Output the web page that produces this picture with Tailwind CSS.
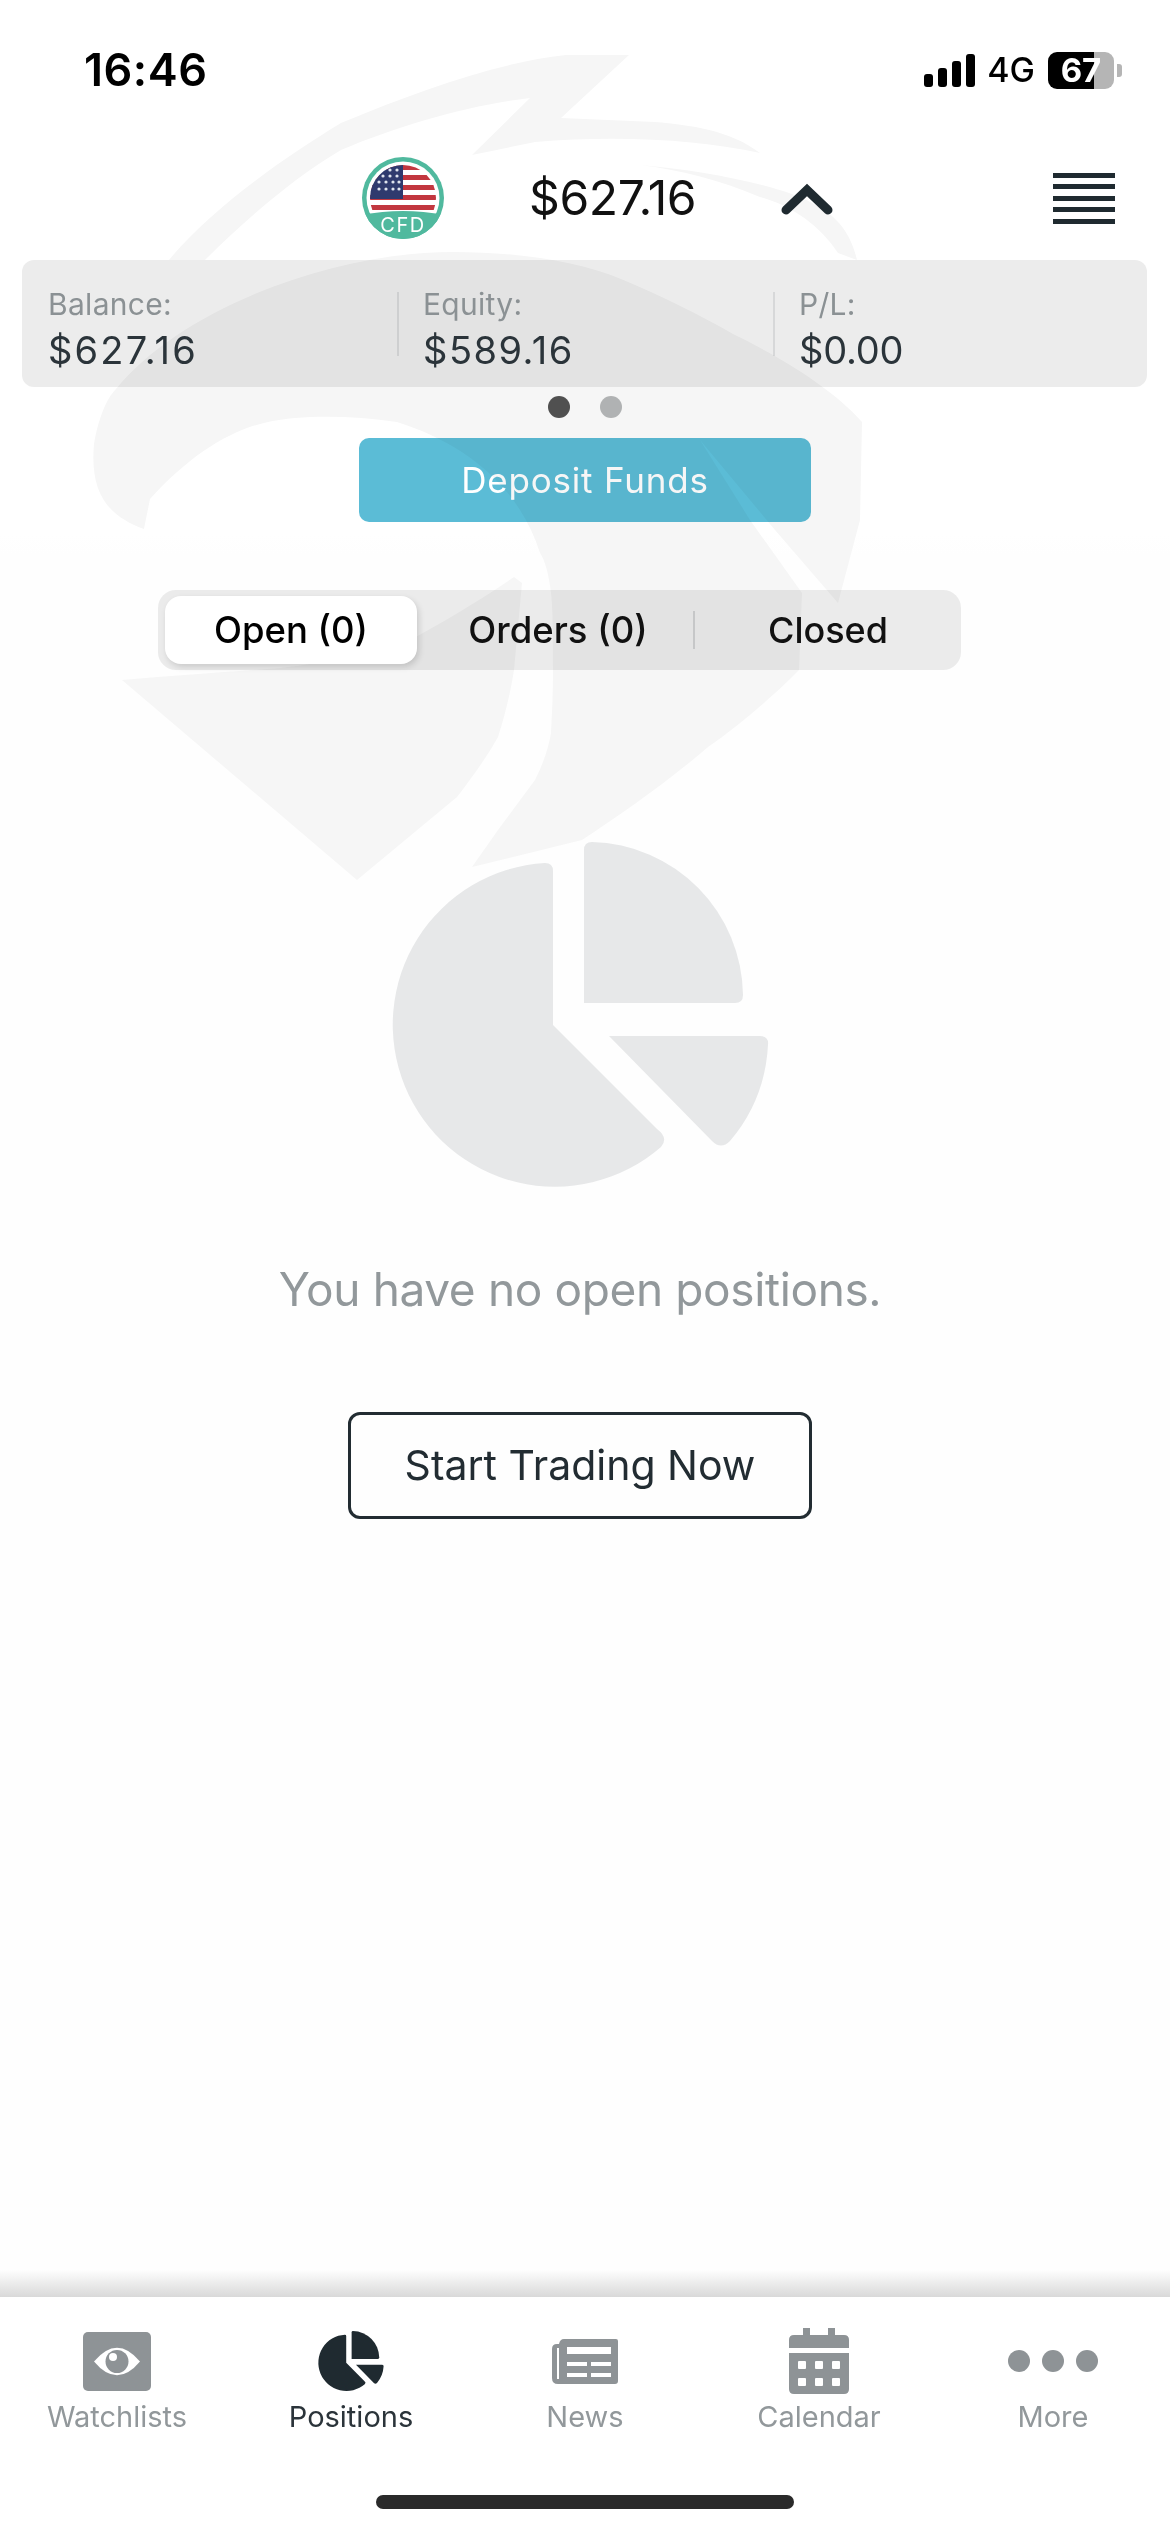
<!DOCTYPE html>
<html lang="en">
<head>
    <meta charset="UTF-8" />
    <meta name="viewport" content="width=device-width, initial-scale=1.0" />
    <title>Positions</title>
    <script src="https://cdn.jsdelivr.net/npm/@tailwindcss/browser@4"></script>
</head>
<body class="bg-white [font-family:Inter,sans-serif]">
<div class="relative w-[1170px] h-[2532px] overflow-hidden flex flex-col bg-[linear-gradient(#fff_535px,#fefefe_555px)]">

    <!-- faint logo behind everything -->
    <svg class="absolute left-0 top-0" width="1170" height="900" viewBox="0 0 1170 900" fill="#f6f6f6">
        <path d="M629 55 L566 55 C500 62 420 90 341 123 C280 160 210 210 169 260 L205 260 C240 225 290 180 341 150 C400 125 470 105 530 98 L472 155 L535 142 C620 135 700 140 760 153 C730 130 690 125 655 122 L561 118 Z" />
        <path d="M640 165 C700 170 780 185 812 203 C835 215 850 230 857 260 L838 253 C820 225 790 205 760 197 C720 180 680 170 640 165 Z" />
        <path d="M144 529 C105 515 90 490 94 444 C100 410 110 395 116 389 C180 310 330 252 453 252 C520 252 580 262 621 279 C660 295 700 315 733 334 C770 352 830 385 862 422 L860 520 L838 603 L775 530 L700 440 L750 520 L802 593 L799 670 C780 690 740 725 708 747 C670 780 620 815 582 840 L472 867 L498 830 L535 780 C545 760 549 745 551 733 C553 700 553 680 553 670 C553 640 553 610 551 593 C549 575 545 560 540 553 C520 490 470 445 397 422 C350 415 300 415 268 422 C230 430 190 455 150 499 Z" />
        <path d="M122 680 C180 675 230 672 280 668 C330 662 370 655 400 645 C440 625 480 600 514 577 L522 583 L514 670 C510 695 505 715 498 737 C485 760 470 780 457 797 L357 880 Z" />
    </svg>

    <!-- status bar -->
    <div class="relative h-[140px] flex items-center pl-[84px] pr-[48px] shrink-0">
        <span class="text-[45px] font-semibold text-black tracking-[0.5px]">16:46</span>
        <div class="ml-auto flex items-center">
            <div class="flex items-end gap-[5px] h-[34px]">
                <div class="w-[9px] h-[13px] rounded-[3px] bg-black"></div>
                <div class="w-[9px] h-[19px] rounded-[3px] bg-black"></div>
                <div class="w-[9px] h-[26px] rounded-[3px] bg-black"></div>
                <div class="w-[9px] h-[33px] rounded-[3px] bg-black"></div>
            </div>
            <span class="ml-[12px] text-[34px] font-medium text-black leading-none">4G</span>
            <div class="relative ml-[13px] w-[66px] h-[37px] flex">
                <div class="w-[46px] h-full bg-black rounded-l-[9px]"></div>
                <div class="w-[20px] h-full bg-[#b5b5b5] rounded-r-[9px]"></div>
                <span class="absolute inset-0 flex items-center justify-center text-[33px] font-bold text-white leading-none">67</span>
            </div>
            <div class="ml-[3px] w-[5px] h-[13px] rounded-r-[3px] bg-[#b5b5b5]"></div>
        </div>
    </div>

    <!-- account header -->
    <div class="relative mt-[8px] h-[100px] flex items-center pl-[362px] shrink-0">
        <svg width="82" height="82" viewBox="0 0 82 82">
            <defs>
                <clipPath id="flag"><circle cx="41" cy="41" r="33" /></clipPath>
                <clipPath id="badge"><circle cx="41" cy="41" r="41" /></clipPath>
            </defs>
            <circle cx="41" cy="41" r="41" fill="#50b99e" />
            <circle cx="41" cy="41" r="36.5" fill="#fff" />
            <g clip-path="url(#flag)">
                <rect width="82" height="82" fill="#fff" />
                <rect x="8" y="8" width="66" height="5" fill="#c2373f" />
                <rect x="8" y="18" width="66" height="5" fill="#c2373f" />
                <rect x="8" y="28" width="66" height="5" fill="#c2373f" />
                <rect x="8" y="38" width="66" height="5" fill="#c2373f" />
                <rect x="8" y="48" width="66" height="5" fill="#c2373f" />
                <rect x="8" y="8" width="33" height="34" fill="#2f3a6e" />
                <g fill="#dfe3ee">
                    <circle cx="17" cy="25" r="1.6" /><circle cx="24" cy="25" r="1.6" /><circle cx="31" cy="25" r="1.6" /><circle cx="37" cy="25" r="1.6" />
                    <circle cx="21" cy="19" r="1.6" /><circle cx="28" cy="19" r="1.6" /><circle cx="35" cy="19" r="1.6" />
                    <circle cx="17" cy="32" r="1.6" /><circle cx="24" cy="32" r="1.6" /><circle cx="31" cy="32" r="1.6" /><circle cx="37" cy="32" r="1.6" />
                    <circle cx="28" cy="13" r="1.6" /><circle cx="35" cy="13" r="1.6" />
                </g>
            </g>
            <g clip-path="url(#badge)">
                <path d="M0 58 Q41 50 82 58 L82 82 L0 82 Z" fill="#50b99e" />
            </g>
            <text x="41" y="75" text-anchor="middle" font-size="20" fill="#fff" letter-spacing="1.5" font-family="Inter, sans-serif">CFD</text>
        </svg>
        <span class="ml-[85px] text-[48px] text-[#111] tracking-[-0.4px] leading-none">$627.16</span>
        <svg class="ml-[85px]" width="56" height="36" viewBox="0 0 56 36" fill="none" stroke="#1f2a30" stroke-width="9" stroke-linejoin="miter" stroke-linecap="round">
            <path d="M5 30 L26 10 L47 30" />
        </svg>
        <div class="ml-auto mr-[55px] flex flex-col gap-[6.5px]">
            <div class="w-[62px] h-[5px] bg-[#1f2a30]"></div>
            <div class="w-[62px] h-[5px] bg-[#1f2a30]"></div>
            <div class="w-[62px] h-[5px] bg-[#1f2a30]"></div>
            <div class="w-[62px] h-[5px] bg-[#1f2a30]"></div>
            <div class="w-[62px] h-[5px] bg-[#1f2a30]"></div>
        </div>
    </div>

    <!-- balance panel -->
    <div class="relative mt-[12px] ml-[22px] w-[1125px] h-[127px] rounded-[12px] bg-[#2a2c2c]/[0.09] flex items-center shrink-0">
        <div class="w-[377px] h-[64px] pl-[26px] border-r-2 border-[#1f2a30]/10">
            <div class="text-[30px] leading-[28px] text-[#8b9194] tracking-[0.3px] -mt-[2px]">Balance:</div>
            <div class="text-[38px] leading-[44px] mt-[10px] text-[#2b343a] tracking-[2.2px]">$627.16</div>
        </div>
        <div class="w-[376px] h-[64px] pl-[24px] border-r-2 border-[#1f2a30]/10">
            <div class="text-[30px] leading-[28px] text-[#8b9194] tracking-[0.3px] -mt-[2px]">Equity:</div>
            <div class="text-[38px] leading-[44px] mt-[10px] text-[#2b343a] tracking-[1.5px]">$589.16</div>
        </div>
        <div class="h-[64px] pl-[24px]">
            <div class="text-[30px] leading-[28px] text-[#8b9194] tracking-[0.3px] -mt-[2px]">P/L:</div>
            <div class="text-[38px] leading-[44px] mt-[10px] text-[#2b343a] tracking-[-0.2px]">$0.00</div>
        </div>
    </div>

    <!-- pager dots -->
    <div class="relative mt-[9px] ml-[548px] flex gap-[30px] shrink-0">
        <div class="w-[22px] h-[22px] rounded-full bg-[#505050]"></div>
        <div class="w-[22px] h-[22px] rounded-full bg-[#b0b2b3]"></div>
    </div>

    <button class="relative mt-[20px] ml-[359px] w-[452px] h-[84px] rounded-[10px] bg-[#5bbcd6] mix-blend-multiply text-white text-[35px] tracking-[0.8px] shrink-0">Deposit Funds</button>

    <!-- open / orders / closed -->
    <div class="relative mt-[68px] ml-[158px] w-[803px] h-[80px] rounded-[18px] bg-[#2a2c2c]/[0.09] flex items-center shrink-0">
        <div class="ml-[7px] w-[252px] h-[68px] rounded-[16px] bg-white shadow-[2px_3px_6px_rgba(0,0,0,0.14)] flex items-center justify-center text-[36.5px] font-medium text-black">Open (0)</div>
        <div class="w-[276px] flex justify-center pl-[6px] text-[36.5px] font-medium text-[#111]">Orders (0)</div>
        <div class="w-[2px] h-[38px] bg-[#1f2a30]/15"></div>
        <div class="flex-1 flex justify-center text-[36px] font-medium text-[#111]">Closed</div>
    </div>

    <!-- empty state -->
    <div class="relative mt-[172px] flex flex-col items-center shrink-0">
        <svg class="translate-x-[-5px] overflow-visible" width="375" height="345" viewBox="392 842 375 345" fill="#1f2a30" fill-opacity="0.1">
            <path d="M552 1025 L656 1129 Q668 1138 660 1147 A162 162 0 1 1 544 863 Q552 863 552 871 Z" />
            <path d="M583 1003 L583 850 Q583 842 591 842 A155 155 0 0 1 742 995 Q742 1003 734 1003 Z" />
            <path d="M608 1036 L759 1036 Q768 1036 767 1045 A162 162 0 0 1 729 1141 Q720 1150 711 1141 Z" />
        </svg>
        <p class="mt-[74px] translate-x-[-5px] text-[46px] leading-[56px] tracking-[-0.37px] text-[#92989b]">You have no open positions.</p>
        <button class="mt-[95px] translate-x-[-5px] w-[464px] h-[107px] rounded-[12px] border-[3px] border-[#222c32] text-[41px] text-[#222c32]">Start Trading Now</button>
    </div>

    <!-- bottom tab bar -->
    <div class="relative mt-auto h-[27px] bg-gradient-to-b from-transparent to-[#d9d9d9] shrink-0"></div>
    <div class="relative h-[235px] bg-white shrink-0 flex flex-col">
        <div class="grid grid-cols-5 pt-[31px]">
            <div class="flex flex-col items-center">
                <div class="h-[66px] flex items-center">
                    <svg width="68" height="59" viewBox="0 0 68 59">
                        <rect width="68" height="59" rx="5" fill="#8e9396" />
                        <path d="M11 29.5 Q34 2 57 29.5 Q34 57 11 29.5 Z" fill="#fff" />
                        <circle cx="34" cy="29.5" r="11.5" fill="#8e9396" />
                        <circle cx="30" cy="25" r="4" fill="#fff" />
                    </svg>
                </div>
                <span class="mt-[6px] text-[29px] leading-[34px] text-[#92989b]">Watchlists</span>
            </div>
            <div class="flex flex-col items-center">
                <div class="h-[66px] flex items-center">
                    <svg class="overflow-visible" width="66" height="60" viewBox="392 842 375 345" fill="#1f2a30">
                        <path d="M552 1025 L656 1129 Q668 1138 660 1147 A162 162 0 1 1 544 863 Q552 863 552 871 Z" />
                        <path d="M583 1003 L583 850 Q583 842 591 842 A155 155 0 0 1 742 995 Q742 1003 734 1003 Z" />
                        <path d="M608 1036 L759 1036 Q768 1036 767 1045 A162 162 0 0 1 729 1141 Q720 1150 711 1141 Z" />
                    </svg>
                </div>
                <span class="mt-[6px] text-[29px] leading-[34px] text-[#2b343a]">Positions</span>
            </div>
            <div class="flex flex-col items-center">
                <div class="h-[66px] flex items-center">
                    <svg width="66" height="45" viewBox="0 0 66 45">
                        <path d="M0 10 Q0 5 5 5 L7 5 Q8 0 12 0 L64 0 Q66 0 66 2 L66 42 Q66 45 63 45 L6 45 Q0 45 0 39 Z" fill="#8e9396" />
                        <rect x="5" y="9" width="2" height="31" fill="#fff" />
                        <rect x="15" y="8" width="44" height="7" fill="#fff" />
                        <rect x="15" y="23" width="20" height="4" fill="#fff" />
                        <rect x="39" y="23" width="20" height="4" fill="#fff" />
                        <rect x="15" y="34" width="20" height="4" fill="#fff" />
                        <rect x="39" y="34" width="20" height="4" fill="#fff" />
                    </svg>
                </div>
                <span class="mt-[6px] text-[29px] leading-[34px] text-[#92989b]">News</span>
            </div>
            <div class="flex flex-col items-center">
                <div class="h-[66px] flex items-center">
                    <svg width="60" height="66" viewBox="0 0 60 66" fill="#8e9396">
                        <rect x="14" y="0" width="7" height="10" />
                        <rect x="39" y="0" width="7" height="10" />
                        <path d="M0 20 L0 12 Q0 7 5 7 L55 7 Q60 7 60 12 L60 20 Z" />
                        <path d="M0 25 L60 25 L60 61 Q60 66 55 66 L5 66 Q0 66 0 61 Z" />
                        <g fill="#fff">
                            <rect x="9" y="33" width="8" height="8" rx="1" /><rect x="26" y="33" width="8" height="8" rx="1" /><rect x="43" y="33" width="8" height="8" rx="1" />
                            <rect x="9" y="50" width="8" height="8" rx="1" /><rect x="26" y="50" width="8" height="8" rx="1" /><rect x="43" y="50" width="8" height="8" rx="1" />
                        </g>
                    </svg>
                </div>
                <span class="mt-[6px] text-[29px] leading-[34px] text-[#92989b]">Calendar</span>
            </div>
            <div class="flex flex-col items-center">
                <div class="h-[66px] flex items-center gap-[12px]">
                    <div class="w-[22px] h-[22px] rounded-full bg-[#8e9396]"></div>
                    <div class="w-[22px] h-[22px] rounded-full bg-[#8e9396]"></div>
                    <div class="w-[22px] h-[22px] rounded-full bg-[#8e9396]"></div>
                </div>
                <span class="mt-[6px] text-[29px] leading-[34px] text-[#92989b]">More</span>
            </div>
        </div>
        <div class="mt-auto mb-[23px] mx-auto w-[418px] h-[14px] rounded-full bg-[#2a2a2a]"></div>
    </div>
</div>
</body>
</html>
